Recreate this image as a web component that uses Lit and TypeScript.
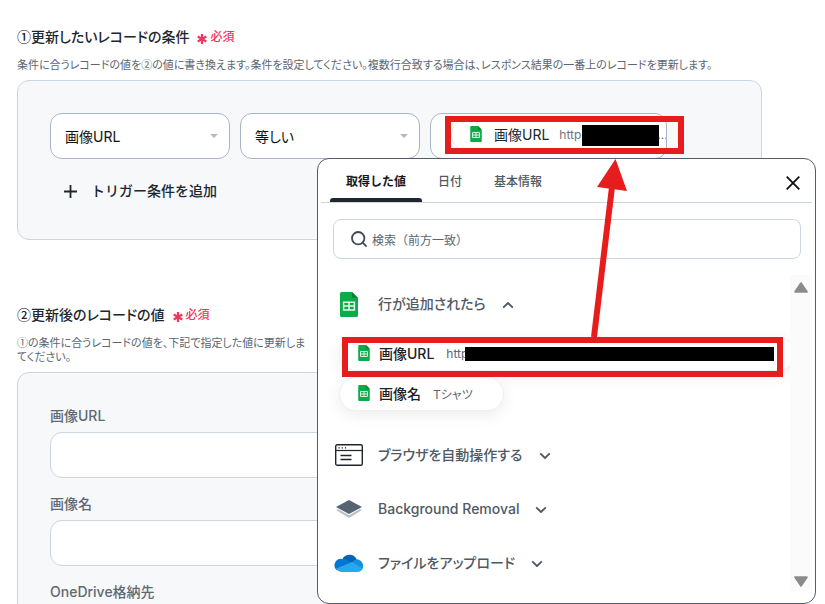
import { LitElement, html, css, svg, nothing } from "lit";
import { customElement, state } from "lit/decorators.js";
import { classMap } from "lit/directives/class-map.js";

const sheetIcon = (cls: string) => html`<svg class=${cls} viewBox="0 0 18 25" aria-hidden="true">
  <path d="M1.6 0H12l6 6v17.4a1.6 1.6 0 0 1-1.6 1.6H1.6A1.6 1.6 0 0 1 0 23.400V1.600A1.600 1.600 0 0 1 1.600 0z" fill="#0aac48" />
  <path d="M12 0l6 6h-4.500A1.500 1.500 0 0 1 12 4.500z" fill="#06832f" />
  <path d="M3.600 10.300h10.800v7.600H3.600zM9 10.300v7.600M3.600 14.100h10.800" fill="none" stroke="#e9f8ee" stroke-width="1.500" />
</svg>`;

const browserIcon = html`<svg width="28" height="22" viewBox="0 0 28 22" fill="none" stroke="#20252c" aria-hidden="true">
  <rect x=".7" y=".7" width="26.6" height="20.600" rx="1.600" stroke-width="1.400" />
  <path d="M1 6.500h26" stroke-width="1.200" />
  <path d="M3.500 3.800h1.200M6.700 3.800h1.200M9.900 3.800h1.200" stroke-width="1.300" />
  <path d="M5.500 11.500h11M5.500 15.500h11" stroke-width="1.300" />
</svg>`;

const layersIcon = html`<svg width="28" height="20" viewBox="0 0 28 20" aria-hidden="true">
  <path d="M1 11l13-5 13 5-13 8z" fill="#b9bfc5" />
  <path d="M0 8.300L14 0l14 8.300L14 16.200z" fill="#fff" />
  <path d="M1 8L14 1l13 7-13 7z" fill="#566370" />
</svg>`;

const cloudIcon = html`<svg width="30" height="20" viewBox="0 0 30 20" aria-hidden="true">
  <path d="M8 7a8 8 0 0 1 14.800-.5L14 12z" fill="#0364b8" />
  <path d="M8 5.900a6.500 6.500 0 0 1 4.500.9L19 10.500 2.500 17A6.500 6.500 0 0 1 8 5.900z" fill="#0078d4" />
  <path d="M22.600 6.300A6.800 6.800 0 0 1 28.500 16L17.500 9.600l2.600-1.900a6.500 6.500 0 0 1 2.500-1.400z" fill="#1490df" />
  <path d="M2.200 15.600L17.500 9.300l11.300 6.300A6 6 0 0 1 23.500 19H7.300a6.200 6.200 0 0 1-5.100-3.400z" fill="#28a8ea" />
</svg>`;

const chevron = (up: boolean) => html`<svg class="chev" viewBox="0 0 12 8" fill="none" stroke="#4f5964" stroke-width="1.800" aria-hidden="true">
  <path d=${up ? "M1.200 6.700L6 2l4.800 4.700" : "M1.200 1.300L6 6l4.800-4.700"} stroke-linejoin="round" />
</svg>`;

const triangle = (d: string) => html`<svg width="14" height="11" viewBox="0 0 14 11" aria-hidden="true">
  <path d=${d} fill="#8b8b8b" stroke="#8b8b8b" stroke-width="2" stroke-linejoin="round" />
</svg>`;

const baseStyles = css`
  * { box-sizing: border-box; }
  :host {
    font-family: Inter, "Noto Sans CJK JP", sans-serif;
    font-feature-settings: "palt";
  }
  button, select, input {
    font: inherit;
    font-feature-settings: inherit;
    color: inherit;
    margin: 0;
  }
  button { background: none; border: 0; padding: 0; cursor: pointer; }
  svg { display: block; flex: none; }
  .sheet-lg { width: 18px; height: 25px; }
  .sheet-sm { width: 12px; height: 16px; }
`;

@customElement("value-picker")
class ValuePicker extends LitElement {
  @state() tab = 0;
  @state() open = 0;

  tabs = ["取得した値", "日付", "基本情報"];
  groups = [
    { title: "行が追加されたら", icon: sheetIcon("sheet-lg") },
    { title: "ブラウザを自動操作する", icon: browserIcon },
    { title: "Background Removal", icon: layersIcon },
    { title: "ファイルをアップロード", icon: cloudIcon },
  ];

  static styles = [baseStyles, css`
    :host {
      display: flex;
      flex-direction: column;
      background: #fff;
      border: 1px solid #525c6b;
      border-radius: 12px;
      padding: 0 3px 12px;
      color: #4f5964;
    }
    .head { display: flex; align-items: center; border-bottom: 1px solid #cdd5df; padding: 0 12px 0 9px; }
    .tabs { display: flex; flex: 1; }
    .tab {
      height: 43px;
      padding: 4px 16px 0;
      border-bottom: 4px solid transparent;
      font-size: 12px;
      font-weight: 500;
      font-feature-settings: normal;
      position: relative;
    }
    .tab.on { color: #14181d; font-weight: 700; }
    .tab.on::after {
      content: "";
      position: absolute;
      left: 0;
      right: 0;
      bottom: -4px;
      height: 4px;
      border-radius: 3px 3px 0 0;
      background: #20262e;
    }
    .close { padding-top: 5px; }
    .search {
      display: flex;
      align-items: center;
      gap: 5px;
      height: 40px;
      margin: 16px 11px 16px 12px;
      padding: 0 17px;
      border: 1px solid #cdd5df;
      border-radius: 8px;
    }
    .search input {
      flex: 1;
      min-width: 0;
      height: 100%;
      border: 0;
      outline: 0;
      padding: 2px 0 0;
      background: none;
      font-size: 12px;
      font-feature-settings: normal;
      color: #4f5964;
    }
    .search input::placeholder { color: #5b6570; opacity: 1; }
    .body { display: flex; flex: 1; min-height: 0; }
    .list { flex: 1; min-width: 0; overflow: hidden; padding: 14px 0 0 13px; }
    .group { display: flex; align-items: center; height: 30px; margin-bottom: 24px; font-size: 14px; font-weight: 500; }
    .group.open { margin-bottom: 18px; }
    .title { padding-bottom: 2px; }
    .mark { display: flex; justify-content: center; width: 30px; margin-right: 14px; }
    .chev { width: 12px; height: 8px; margin: 2px 0 0 16px; }
    .chips { display: flex; flex-direction: column; align-items: flex-start; gap: 6px; padding-left: 5px; margin-bottom: 29px; }
    .chip {
      display: flex;
      align-items: center;
      flex: none;
      height: 34px;
      padding: 0 30px 2px 18px;
      border: 1px solid #eef0f2;
      border-radius: 17px;
      background: #fff;
      box-shadow: 0 4px 16px rgba(0, 0, 0, .08);
      font-size: 14px;
      font-weight: 500;
      color: #1c2128;
      white-space: nowrap;
    }
    .chip.wide { width: 456px; }
    .chip .name { margin: 0 12px 0 9px; }
    .chip .val { font-size: 12px; font-weight: 400; color: #5b6570; }
    .bar {
      width: 22px;
      background: #fbfbfb;
      display: flex;
      flex-direction: column;
      align-items: center;
      justify-content: space-between;
      padding: 7px 0 4px;
    }
  `];

  render() {
    return html`
      <div class="head">
        <div class="tabs" role="tablist">
          ${this.tabs.map((t, i) => html`<button role="tab" aria-selected=${i === this.tab}
            class=${classMap({ tab: true, on: i === this.tab })} @click=${() => (this.tab = i)}>${t}</button>`)}
        </div>
        <button class="close" aria-label="閉じる" @click=${() => (this.hidden = true)}>
          <svg width="14" height="14" viewBox="0 0 14 14" stroke="#111" stroke-width="1.800"><path d="M.7.7l12.600 12.600M13.300.7L.7 13.300" /></svg>
        </button>
      </div>
      <label class="search">
        <svg width="16" height="16" viewBox="0 0 16 16" fill="none" stroke="#3f4a55" stroke-width="1.800">
          <circle cx="7.200" cy="7.200" r="6.200" /><path d="M11.700 11.700L15.600 15.600" />
        </svg>
        <input type="text" aria-label="検索" placeholder="検索（前方一致）" />
      </label>
      <div class="body">
        <div class="list">
          ${this.groups.map((g, i) => html`
            <button class=${classMap({ group: true, open: i === this.open })} aria-expanded=${i === this.open}
              @click=${() => (this.open = i)}>
              <span class="mark">${g.icon}</span><span class="title">${g.title}</span>${chevron(i === this.open)}
            </button>
            ${i === 0 && this.open === 0 ? html`<div class="chips">
              <button class="chip wide">${sheetIcon("sheet-sm")}<span class="name">画像URL</span><span class="val">http</span></button>
              <button class="chip">${sheetIcon("sheet-sm")}<span class="name">画像名</span><span class="val">Tシャツ</span></button>
            </div>` : nothing}`)}
        </div>
        <div class="bar">
          ${triangle("M7 1.200L12.800 9.800H1.200z")}
          ${triangle("M1.200 1.200H12.800L7 9.800z")}
        </div>
      </div>`;
  }
}

@customElement("app-root")
class AppRoot extends LitElement {
  static styles = [baseStyles, css`
    :host {
      display: block;
      position: relative;
      height: 100vh;
      overflow: hidden;
      background: #fff;
      color: #20262e;
    }
    .page { padding: 27px 63px 0 17px; display: flex; flex-direction: column; gap: 65px; }
    h2, .note { font-family: "Liberation Sans", "Noto Sans CJK JP", sans-serif; }
    h2 { display: flex; align-items: center; gap: 8px; margin: 0 0 11px; font-size: 14px; line-height: 20px; font-weight: 500; }
    .req { display: flex; align-items: center; gap: 3px; padding-top: 1px; font-size: 12px; line-height: 19px; color: #f0355e; }
    .req svg { margin-top: 2px; }
    .note { margin: 0 0 8px; font-size: 11px; line-height: 14px; color: #5b6672; }
    .panel { border: 1px solid #cdd5df; border-radius: 12px; background: #f6f8fa; padding: 32px 32px 38px; }
    .row { display: grid; grid-template-columns: 180px 180px 237px; gap: 10px; }
    .pick { display: grid; align-items: center; }
    .pick > * { grid-area: 1 / 1; }
    .pick svg { justify-self: end; margin: 0 12px 0 0; pointer-events: none; }
    select {
      appearance: none;
      width: 100%;
      height: 46px;
      padding: 0 14px;
      border: 1px solid #a9b5c5;
      border-radius: 12px;
      background: #fff;
      font-size: 14px;
      color: #111;
    }
    .field {
      display: flex;
      align-items: center;
      height: 46px;
      padding: 0 0 2px 20px;
      border: 1px solid #a9b5c5;
      border-radius: 12px;
      background: #fff;
      overflow: hidden;
    }
    .token {
      display: flex;
      align-items: center;
      flex: none;
      width: 240px;
      height: 34px;
      padding: 0 0 2px 18px;
      border: 1px solid #e6e9ed;
      border-radius: 17px;
      font-size: 14px;
    }
    .token .name { margin: 0 10px 0 12px; }
    .token .val { font-size: 12px; color: #6b7480; }
    .token .dots { margin-left: 76px; }
    .add { display: flex; align-items: center; gap: 14px; margin: 22px 0 0 14px; font-size: 14px; line-height: 20px; font-weight: 500; font-feature-settings: normal; }
    .form { display: flex; flex-direction: column; gap: 16px; padding-top: 33px; }
    .form label { display: flex; flex-direction: column; gap: 6px; font-size: 14px; line-height: 20px; font-weight: 500; color: #5f6873; }
    .form input { width: 100%; height: 46px; padding: 0 14px; border: 1px solid #cdd5df; border-radius: 12px; background: #fff; }
    .popup { position: absolute; top: 158px; left: 317px; right: 9px; height: 446px; }
    .marks { position: absolute; top: 0; left: 0; pointer-events: none; }
  `];

  heading(text: string) {
    return html`<h2>${text}<span class="req">
      <svg width="10" height="10" viewBox="0 0 10 10" stroke="#f0355e" stroke-width="2.200"><path d="M5 0v10M.7 2.500l8.600 5M9.300 2.500l-8.600 5" /></svg>必須</span></h2>`;
  }

  select(label: string, value: string) {
    return html`<div class="pick">
      <select aria-label=${label}><option>${value}</option></select>
      <svg width="8" height="4" viewBox="0 0 8 4"><path d="M0 0h8L4 4z" fill="#b9b9b9" /></svg>
    </div>`;
  }

  annotations() {
    const red = "#e71c1c";
    return svg`
      <rect x="582" y="125" width="77" height="21" fill="#000" />
      <rect x="465" y="347" width="309" height="14" fill="#000" />
      <rect x="448" y="119" width="233" height="32" fill="none" stroke=${red} stroke-width="6" />
      <rect x="345" y="340" width="435" height="34" fill="none" stroke=${red} stroke-width="6" />
      <path d="M594 337L612 187" stroke=${red} stroke-width="6" />
      <path d="M615.500 159L627 191L597 187z" fill=${red} />`;
  }

  render() {
    return html`
      <main class="page">
        <section>
          ${this.heading("①更新したいレコードの条件")}
          <p class="note">条件に合うレコードの値を②の値に書き換えます。条件を設定してください。複数行合致する場合は、レスポンス結果の一番上のレコードを更新します。</p>
          <div class="panel">
            <div class="row">
              ${this.select("項目", "画像URL")}
              ${this.select("条件", "等しい")}
              <div class="field"><span class="token">${sheetIcon("sheet-sm")}<span class="name">画像URL</span><span class="val">http</span><span class="val dots">...</span></span></div>
            </div>
            <button class="add">
              <svg width="13" height="13" viewBox="0 0 13 13" stroke="#20262e" stroke-width="1.800"><path d="M6.500 0v13M0 6.500h13" /></svg>トリガー条件を追加
            </button>
          </div>
        </section>
        <section>
          ${this.heading("②更新後のレコードの値")}
          <p class="note">①の条件に合うレコードの値を、下記で指定した値に更新しま<br />てください。</p>
          <div class="panel form">
            ${["画像URL", "画像名", "OneDrive格納先"].map((t) => html`<label>${t}<input type="text" /></label>`)}
          </div>
        </section>
      </main>
      <value-picker class="popup"></value-picker>
      <svg class="marks" width="825" height="604" viewBox="0 0 825 604" aria-hidden="true">${this.annotations()}</svg>`;
  }
}
